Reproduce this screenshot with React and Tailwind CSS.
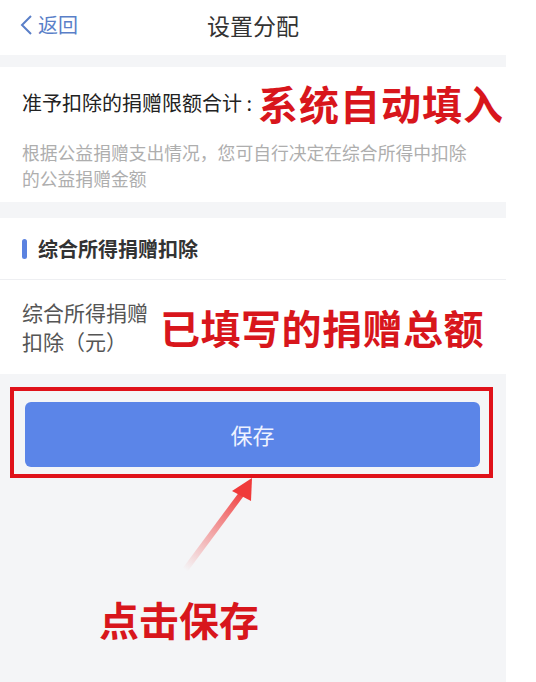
export default function App() {
  const font = { fontFamily: '"Noto Sans CJK SC", "Noto Sans", sans-serif' }

  return (
    <div className="relative w-[536px] h-[682px] bg-white overflow-hidden" style={font}>
      <div className="w-[506px] h-full flex flex-col bg-[#f4f5f7]">
        {/* top bar */}
        <div className="relative h-[55px] bg-white flex items-center justify-center shrink-0 pb-[5px]">
          <div className="absolute left-[19px] top-0 h-full flex items-center pb-[5px] text-[#5a7fc8] text-[20px]">
            <svg width="14" height="22" viewBox="0 0 14 22" className="mr-[5px]">
              <polyline points="12,2 3,11 12,20" fill="none" stroke="#5a7fc8" strokeWidth="2" />
            </svg>
            <span>返回</span>
          </div>
          <span className="text-[23px] text-[#333]">设置分配</span>
        </div>

        {/* limit section */}
        <div className="mt-[12px] bg-white pt-[8px] pb-[11px] px-[22px]">
          <div className="flex items-center h-[56px] whitespace-nowrap">
            <span className="shrink-0 text-[20px] text-[#222] w-[236px]">准予扣除的捐赠限额合计 :</span>
            <span className="shrink-0 text-[40px] leading-[48px] font-bold text-[#d8161c] tracking-[1px]">系统自动填入</span>
          </div>
          <p className="mt-[8px] w-[450px] text-[17.8px] leading-[26px] text-[#aeaeae]">
            根据公益捐赠支出情况，您可自行决定在综合所得中扣除的公益捐赠金额
          </p>
        </div>

        {/* deduction section */}
        <div className="mt-[16px] bg-white">
          <div className="h-[62px] flex items-center pl-[22px] border-b border-[#eeeff2]">
            <span className="w-[5px] h-[20px] rounded-full bg-[#5b82e0] mr-[11px]" />
            <span className="text-[20px] font-bold text-[#333]">综合所得捐赠扣除</span>
          </div>
          <div className="h-[94px] flex items-center pl-[22px] whitespace-nowrap">
            <div className="w-[138px] shrink-0 text-[21px] leading-[29px] text-[#555]">
              <div>综合所得捐赠</div>
              <div>扣除（元）</div>
            </div>
            <span className="shrink-0 text-[40px] leading-[48px] font-bold text-[#d8161c] tracking-[0.5px]">已填写的捐赠总额</span>
          </div>
        </div>

        {/* save button */}
        <div className="mt-[13px] ml-[10px] w-[483px] h-[91px] border-4 border-[#e0121a] pl-[11px] pr-[9px] pt-[11px]">
          <div className="h-[65px] rounded-[6px] bg-[#5b85e8] flex items-center justify-center text-[22px] text-[#eef2ff]">
            保存
          </div>
        </div>

        <div className="mt-[117px] pl-[99px] text-[40px] leading-[48px] font-bold text-[#d8161c]">
          点击保存
        </div>
      </div>

      {/* arrow annotation */}
      <svg className="absolute left-0 top-0" width="536" height="682" viewBox="0 0 536 682">
        <defs>
          <linearGradient id="arr" x1="185" y1="570" x2="245" y2="490" gradientUnits="userSpaceOnUse">
            <stop offset="0" stopColor="#f04848" stopOpacity="0" />
            <stop offset="0.5" stopColor="#f04848" stopOpacity="0.5" />
            <stop offset="1" stopColor="#f03a3a" stopOpacity="1" />
          </linearGradient>
        </defs>
        <line x1="185" y1="570" x2="243" y2="492" stroke="url(#arr)" strokeWidth="6" />
        <polygon points="252,478 232,491 251,501" fill="#f03a3a" />
      </svg>
    </div>
  )
}
